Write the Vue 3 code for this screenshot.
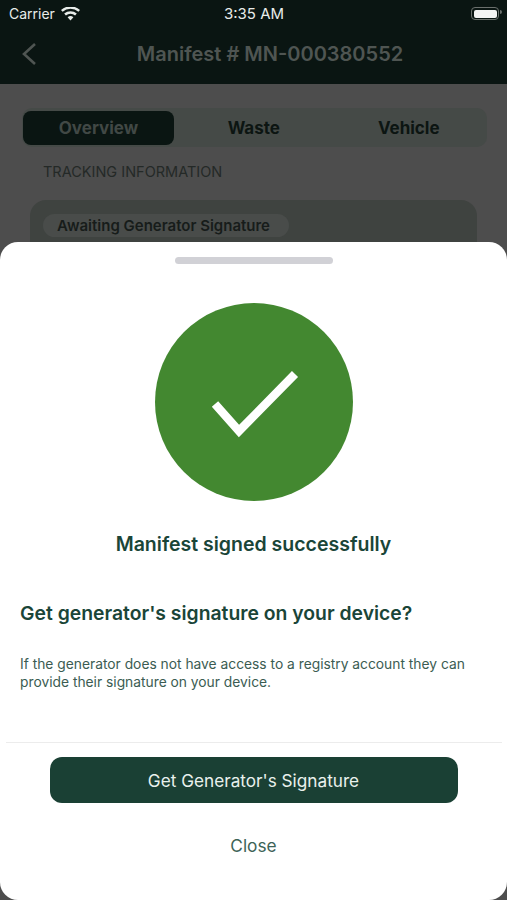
<template>
  <div class="screen">
    <header class="top">
      <div class="status">
        <div class="status-left">
          <span>Carrier</span>
          <svg class="wifi" width="19" height="14" viewBox="0 0 19 14">
            <path d="M9.5 13.6 6.6 10.3a4.3 4.3 0 0 1 5.8 0Z" fill="#e8ecea" />
            <path d="M4.9 8.5 3.2 6.6a9.4 9.4 0 0 1 12.6 0l-1.7 1.9a6.9 6.9 0 0 0-9.2 0Z" fill="#e8ecea" />
            <path d="M1.6 4.8 0 3a14.2 14.2 0 0 1 19 0l-1.6 1.8a11.8 11.8 0 0 0-15.8 0Z" fill="#e8ecea" />
          </svg>
        </div>
        <span class="time">3:35 AM</span>
        <div class="battery"><i></i></div>
      </div>
      <div class="nav">
        <svg class="back" width="16" height="24" viewBox="0 0 16 24">
          <path d="M14 2 3 12l11 10" fill="none" stroke="#4f5552" stroke-width="2.6" />
        </svg>
        <h1>Manifest # MN-000380552</h1>
      </div>
    </header>

    <main class="behind">
      <div class="tabs">
        <div v-for="tab in tabs" :key="tab" class="tab" :class="{ active: tab === 'Overview' }">{{ tab }}</div>
      </div>
      <div class="section">TRACKING INFORMATION</div>
      <div class="card">
        <span class="pill">Awaiting Generator Signature</span>
      </div>
    </main>

    <section class="sheet">
      <div class="handle"></div>
      <div class="circle">
        <svg width="198" height="198" viewBox="0 0 198 198">
          <path d="M60 101 84 128 140 71" fill="none" stroke="#fff" stroke-width="8.5" />
        </svg>
      </div>
      <h2>Manifest signed successfully</h2>
      <h3>Get generator's signature on your device?</h3>
      <p>If the generator does not have access to a registry account they can provide their signature on your device.</p>
      <div class="divider"></div>
      <button class="primary" type="button">Get Generator's Signature</button>
      <button class="close" type="button">Close</button>
    </section>
  </div>
</template>

<script setup>
const tabs = ["Overview", "Waste", "Vehicle"];
</script>

<style>
body {
  background: #4d4d4d;
}
</style>

<style scoped>
.screen {
  position: relative;
  width: 507px;
  height: 900px;
  overflow: hidden;
  background: #4d4d4d;
  font-family: Inter, "Liberation Sans", sans-serif;
}

.top {
  height: 84px;
  background: #0a1512;
}

.status {
  display: grid;
  grid-template-columns: 1fr auto 1fr;
  align-items: center;
  height: 27px;
  padding: 0 8px 0 9px;
  color: #e8ecea;
  font-size: 14px;
}

.status-left {
  display: flex;
  align-items: center;
  gap: 6px;
}

.time {
  font-weight: 400;
  font-size: 15px;
}

.battery {
  position: relative;
  justify-self: end;
  width: 28px;
  height: 13px;
  padding: 1.5px;
  box-sizing: border-box;
  border: 1.5px solid #6b706d;
  border-radius: 4px;
}

.battery::after {
  content: "";
  position: absolute;
  right: -4px;
  top: 2px;
  width: 2px;
  height: 4px;
  background: #6b706d;
  border-radius: 0 2px 2px 0;
}

.battery i {
  display: block;
  height: 100%;
  background: #f4f4f4;
  border-radius: 2px;
}

.nav {
  position: relative;
  height: 57px;
  display: flex;
  align-items: center;
  justify-content: center;
  padding-left: 33px;
}

.back {
  position: absolute;
  left: 21px;
  top: 15px;
}

h1 {
  margin: 0;
  padding-bottom: 3px;
  color: #4f5552;
  font-size: 20px;
  font-weight: 600;
}

.behind {
  padding: 24px 20px 0 22px;
}

.tabs {
  display: grid;
  grid-template-columns: 151px 1fr 1fr;
  align-items: center;
  width: 465px;
  height: 39px;
  box-sizing: border-box;
  padding: 0 0 0 1px;
  background: #454a47;
  border-radius: 10px;
}

.tab {
  height: 34px;
  line-height: 34px;
  text-align: center;
  color: #0c1512;
  font-size: 17px;
  font-weight: 700;
}

.tab:nth-child(2) {
  padding-left: 3px;
}

.tab.active {
  background: #0a1512;
  color: #414845;
  border-radius: 8px;
}

.section {
  margin: 16px 0 0 21px;
  color: #242927;
  font-size: 14.5px;
}

.card {
  height: 100px;
  margin: 20px 10px 0 8px;
  padding: 14px 13px;
  box-sizing: border-box;
  background: #3f4340;
  border-radius: 16px;
}

.pill {
  display: inline-block;
  height: 23px;
  line-height: 23px;
  padding: 0 19px 0 14px;
  background: #494c4a;
  border-radius: 12px;
  color: #171c1a;
  font-size: 15px;
  font-weight: 600;
}

.sheet {
  position: absolute;
  left: 0;
  right: 0;
  top: 242px;
  bottom: 0;
  display: flex;
  flex-direction: column;
  align-items: center;
  background: #fff;
  border-radius: 18px;
}

.handle {
  width: 158px;
  height: 7px;
  margin-top: 15px;
  background: #d1d1d6;
  border-radius: 4px;
}

.circle {
  width: 198px;
  height: 198px;
  margin-top: 39px;
  background: #438830;
  border-radius: 50%;
}

.circle svg {
  display: block;
}

h2 {
  margin: 30px 0 0;
  color: #1a4538;
  font-size: 19.5px;
  line-height: 26px;
  font-weight: 600;
}

h3 {
  align-self: flex-start;
  margin: 43px 0 0 20px;
  color: #1a4538;
  font-size: 19.35px;
  line-height: 26px;
  font-weight: 600;
}

p {
  align-self: flex-start;
  width: 460px;
  margin: 29px 0 0 20px;
  color: #3b5c52;
  font-size: 13.8px;
  line-height: 18px;
}

.divider {
  width: 496px;
  height: 1px;
  margin-top: 51px;
  background: #ececec;
}

.primary {
  width: 408px;
  height: 46px;
  margin-top: 14px;
  border: 0;
  border-radius: 12px;
  background: #1a4034;
  color: #e9f1ed;
  font-family: inherit;
  font-size: 17.2px;
}

.close {
  margin-top: 30px;
  padding: 0;
  border: 0;
  background: none;
  color: #3d6357;
  font-family: inherit;
  font-size: 17.3px;
  line-height: 26px;
}
</style>
